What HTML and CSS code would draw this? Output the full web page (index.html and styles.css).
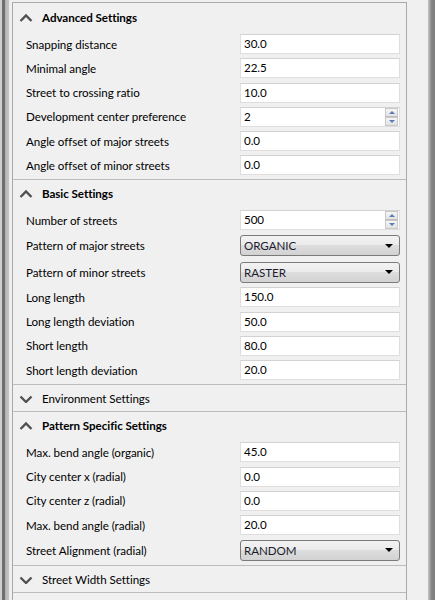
FILE: index.html
```html
<!DOCTYPE html>
<html>
<head>
<meta charset="utf-8">
<link rel="stylesheet" href="styles.css">
</head>
<body>
<div class="window">
  <div class="left-edge"></div>
  <div class="panel">
    <section class="group open">
      <div class="group-head"><svg class="chev" viewBox="0 0 14 9"><path d="M1.5 8 L7 2.5 L12.5 8"/></svg><span class="title">Advanced Settings</span></div>
      <div class="group-body">
        <div class="row"><label>Snapping distance</label><div class="field">30.0</div></div>
        <div class="row"><label>Minimal angle</label><div class="field">22.5</div></div>
        <div class="row"><label>Street to crossing ratio</label><div class="field">10.0</div></div>
        <div class="row"><label>Development center preference</label><div class="field spin"><span>2</span><div class="spin-btns"><div class="sb up"></div><div class="sb down"></div></div></div></div>
        <div class="row"><label>Angle offset of major streets</label><div class="field">0.0</div></div>
        <div class="row"><label>Angle offset of minor streets</label><div class="field">0.0</div></div>
      </div>
    </section>
    <section class="group open">
      <div class="group-head"><svg class="chev" viewBox="0 0 14 9"><path d="M1.5 8 L7 2.5 L12.5 8"/></svg><span class="title">Basic Settings</span></div>
      <div class="group-body">
        <div class="row"><label>Number of streets</label><div class="field spin"><span>500</span><div class="spin-btns"><div class="sb up"></div><div class="sb down"></div></div></div></div>
        <div class="row combo-row"><label>Pattern of major streets</label><div class="combo"><span>ORGANIC</span><i class="arrow"></i></div></div>
        <div class="row combo-row"><label>Pattern of minor streets</label><div class="combo"><span>RASTER</span><i class="arrow"></i></div></div>
        <div class="row"><label>Long length</label><div class="field">150.0</div></div>
        <div class="row"><label>Long length deviation</label><div class="field">50.0</div></div>
        <div class="row"><label>Short length</label><div class="field">80.0</div></div>
        <div class="row"><label>Short length deviation</label><div class="field">20.0</div></div>
      </div>
    </section>
    <section class="group closed">
      <div class="group-head"><svg class="chev" viewBox="0 0 14 9"><path d="M1.5 2.5 L7 8 L12.5 2.5"/></svg><span class="title">Environment Settings</span></div>
    </section>
    <section class="group open">
      <div class="group-head"><svg class="chev" viewBox="0 0 14 9"><path d="M1.5 8 L7 2.5 L12.5 8"/></svg><span class="title">Pattern Specific Settings</span></div>
      <div class="group-body">
        <div class="row"><label>Max. bend angle (organic)</label><div class="field">45.0</div></div>
        <div class="row"><label>City center x (radial)</label><div class="field">0.0</div></div>
        <div class="row"><label>City center z (radial)</label><div class="field">0.0</div></div>
        <div class="row"><label>Max. bend angle (radial)</label><div class="field">20.0</div></div>
        <div class="row combo-row"><label>Street Alignment (radial)</label><div class="combo"><span>RANDOM</span><i class="arrow"></i></div></div>
      </div>
    </section>
    <section class="group closed">
      <div class="group-head"><svg class="chev" viewBox="0 0 14 9"><path d="M1.5 2.5 L7 8 L12.5 2.5"/></svg><span class="title">Street Width Settings</span></div>
    </section>
    <section class="group closed">
      <div class="group-head"></div>
    </section>
  </div>
  <div class="gutter"></div>
  <div class="right-edge"></div>
</div>
</body>
</html>
```
FILE: styles.css
```css
html, body {
  margin: 0;
  padding: 0;
  background: #f0f0f0;
  font-family: "Lato", "Noto Sans", sans-serif;
  font-size: 11.6px;
  letter-spacing: -0.05px;
  color: #000;
}
.window {
  display: flex;
  width: 435px;
  height: 600px;
  overflow: hidden;
}
.left-edge {
  width: 12px;
  flex: none;
  background: linear-gradient(to right, #cfcfcf 0, #cfcfcf 2px, #6f6f6f 2px, #6f6f6f 5px, #a8a8a8 5px, #b8b8b8 6px, #c4c4c4 9px, #ececec 9px, #f0f0f0 12px);
}
.panel {
  width: 393px;
  flex: none;
  margin-top: 2px;
  border: 1px solid #a9a9a9;
  border-bottom: none;
  background: #f0f0f0;
}
.gutter {
  width: 21px;
  flex: none;
}
.right-edge {
  width: 8px;
  flex: none;
  background: linear-gradient(to right, #c4c4c4 0, #a5a5a5 2px, #8a8a8a 3px, #7c7c7c 6px, #8c8c8c 8px);
}
.group {
  border-bottom: 1px solid #bcbcbc;
}
.group-head {
  height: 26px;
  display: flex;
  align-items: center;
  padding-left: 6px;
}
.group:first-child .group-head {
  height: 27px;
  padding-top: 1px;
  box-sizing: border-box;
}
.chev {
  width: 14px;
  height: 9px;
  margin-right: 9px;
}
.chev path {
  fill: none;
  stroke: #505050;
  stroke-width: 2.3;
}
.open .title {
  font-weight: bold;
}
.group-body {
  padding: 4px 6px 4px 13px;
  display: flex;
  flex-direction: column;
  gap: 4.3px;
}
.row {
  display: grid;
  grid-template-columns: 214px 1fr;
  align-items: center;
  height: 20px;
}
.row.combo-row {
  height: 22px;
}
.field {
  height: 18px;
  border: 1px solid #dedede;
  border-top-color: #d2d2d2;
  background: #fff;
  line-height: 18px;
  padding-left: 3px;
  display: flex;
  align-items: center;
}
.field.spin {
  padding-right: 1px;
}
.field.spin span {
  flex: 1;
}
.spin-btns {
  width: 13px;
  height: 18px;
  display: flex;
  flex-direction: column;
}
.sb {
  flex: 1;
  background: linear-gradient(#f6f6f6, #e2e2e2);
  border: 1px solid #c8c8c8;
  position: relative;
}
.sb.up { border-bottom-color: #bdbdbd; }
.sb.up::after, .sb.down::after {
  content: "";
  position: absolute;
  left: 3px;
  top: 2px;
  border-left: 3px solid transparent;
  border-right: 3px solid transparent;
}
.sb.up::after { border-bottom: 3px solid #5a7bb5; }
.sb.down::after { border-top: 3px solid #5a7bb5; }
.combo {
  height: 19px;
  border: 1px solid #7a7a7a;
  border-radius: 3px;
  background: linear-gradient(#f3f3f3 0, #ebebeb 45%, #dddddd 50%, #d2d2d2 100%);
  display: flex;
  align-items: center;
  padding-left: 3px;
  padding-right: 6px;
  color: #1c1c30;
}
.combo span {
  flex: 1;
}
.arrow {
  width: 0;
  height: 0;
  border-left: 4px solid transparent;
  border-right: 4px solid transparent;
  border-top: 4px solid #000;
}
```
